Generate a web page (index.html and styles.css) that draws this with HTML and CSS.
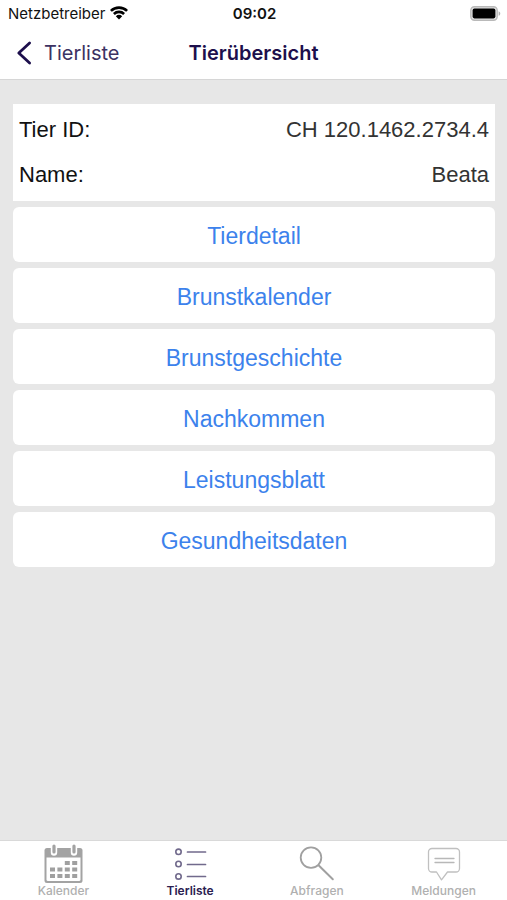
FILE: index.html
```html
<!DOCTYPE html>
<html lang="de">
<head>
<meta charset="utf-8">
<meta name="viewport" content="width=device-width, initial-scale=1">
<title>Tierübersicht</title>
<link rel="stylesheet" href="styles.css">
</head>
<body>
<header class="header">
  <div class="status">
    <div class="carrier">
      <span>Netzbetreiber</span>
      <svg width="18" height="14" viewBox="0 0 18 14" aria-hidden="true">
        <g fill="none" stroke="#000" stroke-width="2.6">
          <path d="M.9 4.900a11.600 11.600 0 0 1 16.200 0"/>
          <path d="M3.900 8a7.300 7.300 0 0 1 10.200 0"/>
        </g>
        <path d="M9 13.600 5.800 10.300a4.700 4.700 0 0 1 6.400 0Z"/>
      </svg>
    </div>
    <time class="clock">09:02</time>
    <svg class="battery" width="31" height="15" viewBox="0 0 31 15" aria-hidden="true">
      <rect x=".8" y=".8" width="26.4" height="13.4" rx="3.6" fill="#e4e4e4" stroke="#b9b9b9" stroke-width="1.4"/>
      <rect x="2.6" y="2.6" width="22.8" height="9.8" rx="1.8"/>
      <path d="M28.600 5.200c2.200.8 2.200 3.800 0 4.600Z" fill="#b0b0b0"/>
    </svg>
  </div>
  <nav class="navbar">
    <a class="back" href="#">
      <svg width="16" height="24" viewBox="0 0 16 24" aria-hidden="true"><path d="M13.600 2 2.800 12l10.800 10" fill="none" stroke="#1d0f4c" stroke-width="2.800" stroke-linecap="round" stroke-linejoin="round"/></svg>
      <span>Tierliste</span>
    </a>
    <h1 class="title">Tierübersicht</h1>
  </nav>
</header>
<main class="content">
  <dl class="card">
    <div class="row"><dt>Tier ID:</dt><dd>CH 120.1462.2734.4</dd></div>
    <div class="row"><dt>Name:</dt><dd>Beata</dd></div>
  </dl>
  <button class="action" type="button">Tierdetail</button>
  <button class="action" type="button">Brunstkalender</button>
  <button class="action" type="button">Brunstgeschichte</button>
  <button class="action" type="button">Nachkommen</button>
  <button class="action" type="button">Leistungsblatt</button>
  <button class="action" type="button">Gesundheitsdaten</button>
</main>
<nav class="tabs">
  <a class="tab" href="#">
    <svg width="40" height="40" viewBox="0 0 40 40" aria-hidden="true">
      <rect x="1.500" y="4" width="38" height="35" rx="2.500" fill="#a3a3a3"/>
      <path d="M3.500 13.500h34V35.500a1.500 1.500 0 0 1-1.500 1.500H5A1.500 1.500 0 0 1 3.500 35.500Z" fill="#fff"/>
      <path d="M11 2.500v6M31 2.500v6" stroke="#fff" stroke-width="6.400" stroke-linecap="round"/>
      <path d="M11 2v6M31 2v6" stroke="#a3a3a3" stroke-width="3.200" stroke-linecap="round"/>
      <path d="M21.800 17h5v4h-5zM29.200 17h5v4h-5zM7 23.400h5v4H7zM14.400 23.400h5v4h-5zM21.800 23.400h5v4h-5zM29.200 23.400h5v4h-5zM7 30h5v4H7zM14.400 30h5v4h-5zM21.800 30h5v4h-5zM29.200 30h5v4h-5z" fill="#a0a0a0"/>
    </svg>
    <span>Kalender</span>
  </a>
  <a class="tab tab-active" href="#" aria-current="page">
    <svg width="40" height="40" viewBox="0 0 40 40" aria-hidden="true">
      <g fill="none" stroke="#716a8c">
        <g stroke-width="1.600"><circle cx="8.500" cy="7.800" r="2.700"/><circle cx="8.500" cy="20" r="2.700"/><circle cx="8.500" cy="32.400" r="2.700"/></g>
        <path d="M17.500 8h18M17.500 20.500h18M17.500 32.500h18" stroke-width="1.700" stroke-linecap="round"/>
      </g>
    </svg>
    <span>Tierliste</span>
  </a>
  <a class="tab" href="#">
    <svg width="40" height="40" viewBox="0 0 40 40" aria-hidden="true">
      <g fill="none" stroke="#a0a0a0" stroke-linecap="round"><circle cx="14" cy="13.600" r="10.300" stroke-width="1.800"/><path d="m21.800 21.500 14 13.800" stroke-width="2"/></g>
    </svg>
    <span>Abfragen</span>
  </a>
  <a class="tab" href="#">
    <svg width="40" height="40" viewBox="0 0 40 40" aria-hidden="true">
      <g fill="none" stroke="#c0c0c0" stroke-width="1.300" stroke-linejoin="round" stroke-linecap="round"><path d="M8 4.500h24a3.500 3.500 0 0 1 3.500 3.500V24.500a3.500 3.500 0 0 1-3.500 3.500h-8.500l-6 7.800-5-7.800H8A3.500 3.500 0 0 1 4.500 24.500V8A3.500 3.500 0 0 1 8 4.500Z"/><path d="M11 14.500h19M11 18.500h19" stroke="#b8b8b8"/></g>
    </svg>
    <span>Meldungen</span>
  </a>
</nav>
</body>
</html>
```
FILE: styles.css
```css
* {
  box-sizing: border-box;
}

body {
  margin: 0;
  min-height: 100vh;
  display: flex;
  flex-direction: column;
  background: #e7e7e7;
  color: #111;
  font-family: "Liberation Sans", Arial, sans-serif;
}

a {
  color: inherit;
  text-decoration: none;
}

svg {
  display: block;
  flex: none;
}

.header {
  background: #fff;
  border-bottom: 1px solid #d6d6d6;
  color: #1d0f4c;
  font-family: Inter, "Liberation Sans", sans-serif;
}

.status,
.navbar {
  display: grid;
  grid-template-columns: 1fr auto 1fr;
  align-items: center;
}

.status {
  height: 26px;
  padding: 0 6px 0 8px;
  color: #111;
  font-size: 15px;
}

.carrier {
  display: flex;
  align-items: center;
  gap: 5px;
}

.clock {
  font-weight: 600;
}

.battery {
  justify-self: end;
}

.navbar {
  height: 53px;
  padding: 0 16px;
  font-size: 20px;
}

.back {
  display: flex;
  align-items: center;
  gap: 12px;
  color: #3c3263;
}

.title {
  margin: 0;
  font-size: 20px;
  font-weight: 600;
}

.content {
  flex: 1;
  display: flex;
  flex-direction: column;
  gap: 6px;
  padding: 24px 12px 24px 13px;
}

.card {
  margin: 0;
  padding: 3px 6px 4px;
  background: #fff;
  font-size: 22px;
}

.row {
  display: flex;
  justify-content: space-between;
  line-height: 45px;
}

.row dd {
  margin: 0;
  color: #333;
}

.action {
  height: 55px;
  padding: 4px 6px 0;
  border: 0;
  border-radius: 6px;
  background: #fff;
  color: #3c82ec;
  font-family: inherit;
  font-size: 23px;
}

.tabs {
  display: grid;
  grid-template-columns: repeat(4, 1fr);
  height: 60px;
  padding-top: 3px;
  border-top: 1px solid #d9d9d9;
  background: #fff;
  color: #b0b0b0;
  font-family: Inter, "Liberation Sans", sans-serif;
  font-size: 12px;
  font-weight: 500;
  line-height: 14px;
}

.tab {
  display: flex;
  flex-direction: column;
  align-items: center;
}

.tab-active {
  color: #2a2050;
  font-weight: 600;
}
```
